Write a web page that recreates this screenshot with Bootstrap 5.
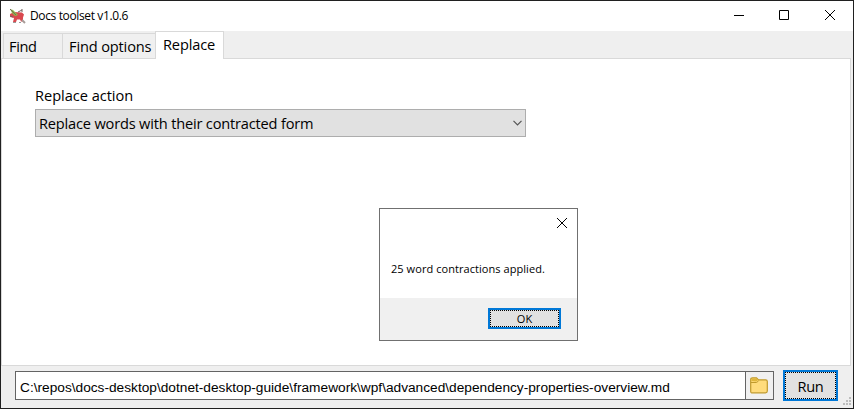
<!DOCTYPE html>
<html lang="en">
<head>
<meta charset="utf-8">
<title>Docs toolset</title>
<link href="https://cdn.jsdelivr.net/npm/bootstrap@5.3.0/dist/css/bootstrap.min.css" rel="stylesheet">
<style>
body{margin:0;overflow:hidden;font-family:"Open Sans","Noto Sans",sans-serif;color:#000;line-height:1}
.window{width:854px;height:409px;border:1px solid #202020;background:#efefef}
.titlebar{height:30px;flex:none;background:#fff;padding-left:8px}
.app-title{font-size:12px;letter-spacing:-.37px;margin-left:4px}
.winbtn{width:46px;height:30px;padding:0 0 2px;border:0;background:none}
.minimize{padding-left:2px}
.tabs{height:28px;flex:none;padding-left:2px;margin-bottom:-1px;z-index:1}
.tabs .nav-link{height:26px;margin:0;padding:0 0 0 5px;border:1px solid #d9d9d9;border-radius:0;background:#f0f0f0;color:#000;font-size:14.6px;letter-spacing:-.15px;line-height:24px;text-align:left;white-space:nowrap}
.tabs .nav-link.active{height:28px;border-bottom:0;background:#fff;color:#000;padding:0 0 2px 7px;line-height:23px}
.tabs .tab-find{width:60px;letter-spacing:-.35px}.tabs .tab-options{width:93px;border-left:0;padding-left:6px}.tabs .tab-replace{width:69px;margin-left:-1px}
.page{height:308px;flex:none;margin-right:2px;border:1px solid #d9d9d9;background:#fff;padding:28px 0 0 33px}
.page label{font-size:14.6px;line-height:17px;letter-spacing:-.03px}
.combo{width:491px;height:28px;border:1px solid #adadad;background:#e1e1e1;margin-top:5px;padding:0 3px;font-size:14.6px;letter-spacing:-.18px}
.bottom{padding:5px 15px 0 14px}
.pathbox{width:759px;height:29px;border:1px solid #646464;background:#fff}
.pathbox input{border:0;outline:0;padding:3px 0 0 4px;font:13.7px "Liberation Sans",Arial,sans-serif;color:#000;background:#fff;min-width:0}
.browse{width:28px;border:0;border-left:1px solid #646464;background:#f0f0f0;padding:0 2px 0 0}
.default-btn{border:2px solid #0078d7;border-radius:0;background:#e1e1e1;padding:0;color:#000;outline:1px dotted #000;outline-offset:-3px}
.run{width:55px;height:31px;margin:-1px 0 0 9px;font-size:14.6px;letter-spacing:-.3px;line-height:26px}
.msgbox{left:379px;top:208px;width:199px;height:133px;border:1px solid #707070;background:#fff;z-index:5}
.msgclose{width:30px;height:28px;padding:0}
.msg{font-size:11px;letter-spacing:.06px;padding:0 0 0 11px;height:61px;line-height:64px}
.msgfoot{height:42px;background:#f0f0f0;padding:10px 16px 0 0}
.ok{width:73px;height:21px;font-size:11px;line-height:17px}
.grip{right:2px;bottom:3px}
</style>
<script src="https://cdn.jsdelivr.net/npm/bootstrap@5.3.0/dist/js/bootstrap.bundle.min.js"></script>
</head>
<body>
<main class="window d-flex flex-column position-relative">
  <header class="titlebar d-flex align-items-center">
    <svg width="17" height="17" viewBox="0 0 17 17"><path d="M1 6l4-2 8 .5 2 2-1 3v4h-2l-1-2H8l-1 2.500H4l1-4-4-1z" fill="#d9484e"/><path d="M1 1l3 1 2 2 3 3-3 1-3-3z" fill="#8cbf45"/><path d="M1 1l6 6M13 1v3M9 4l4-2M1 8l3 1" stroke="#75635f" fill="none"/><path d="M13 12l3 3" stroke="#a79c98" stroke-width="2"/><path d="M4 14.500h3M10 14.500h2" stroke="#999"/></svg>
    <span class="app-title">Docs toolset v1.0.6</span>
    <div class="ms-auto d-flex">
      <button class="winbtn minimize" aria-label="Minimize"><svg class="d-block m-auto" width="10" height="10"><path d="M0 5.5h10" stroke="#000"/></svg></button>
      <button class="winbtn" aria-label="Maximize"><svg class="d-block m-auto" width="10" height="10"><path d="M.5.5h9v9h-9z" fill="none" stroke="#000"/></svg></button>
      <button class="winbtn" aria-label="Close"><svg class="d-block m-auto" width="10" height="10"><path d="M0 0l10 10M10 0L0 10" stroke="#000"/></svg></button>
    </div>
  </header>
  <nav class="tabs nav align-items-end position-relative">
    <button class="nav-link tab-find">Find</button>
    <button class="nav-link tab-options">Find options</button>
    <button class="nav-link active tab-replace">Replace</button>
  </nav>
  <section class="page">
    <label class="d-block">Replace action</label>
    <div class="combo d-flex align-items-center justify-content-between">
      <span>Replace words with their contracted form</span>
      <svg width="9" height="6"><path d="M.5.8l4 4 4-4" fill="none" stroke="#555" stroke-width="1.2"/></svg>
    </div>
  </section>
  <footer class="bottom d-flex align-items-start">
    <div class="pathbox d-flex">
      <input class="flex-fill" aria-label="Path" value="C:\repos\docs-desktop\dotnet-desktop-guide\framework\wpf\advanced\dependency-properties-overview.md">
      <button class="browse d-flex align-items-center justify-content-center" aria-label="Browse"><svg width="18" height="17" viewBox="0 0 18 17"><path d="M.7 14V2.500Q.7.8 2.500.8h4l2 2h7.200q1.600 0 1.600 1.600V14q0 1.800-1.800 1.800h-14Q.7 15.800.7 14z" fill="#ffdc7c" stroke="#c09a2c" stroke-width="1.2"/><path d="M1.500 4V2.500Q1.500 1.500 2.500 1.500h4l1.500 1.500L6.500 4.500z" fill="#dfb63c"/><path d="M1 5.500h5.500l2-1.500" fill="none" stroke="#c09a2c"/></svg></button>
    </div>
    <button class="run default-btn">Run</button>
  </footer>
  <svg class="grip position-absolute" width="8" height="8" fill="#bdbdbd"><path d="M6 0h2v2H6zM3 3h2v2H3zM6 3h2v2H6zM0 6h2v2H0zM3 6h2v2H3zM6 6h2v2H6z"/></svg>
</main>
<div class="msgbox position-absolute" role="dialog">
  <div class="d-flex justify-content-end"><button class="winbtn msgclose" aria-label="Close"><svg class="d-block m-auto" width="10" height="10"><path d="M0 0l10 10M10 0L0 10" stroke="#000"/></svg></button></div>
  <div class="msg">25 word contractions applied.</div>
  <div class="msgfoot d-flex justify-content-end align-items-start"><button class="ok default-btn">OK</button></div>
</div>
</body>
</html>
